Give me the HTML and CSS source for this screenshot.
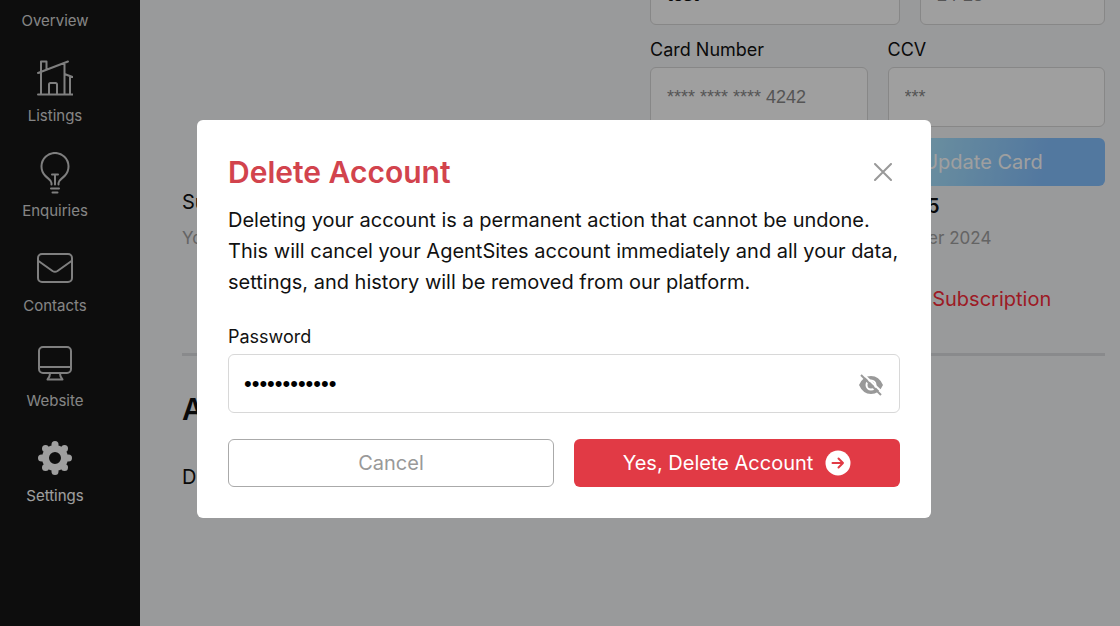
FILE: index.html
```html
<!DOCTYPE html>
<html lang="en">
<head>
  <meta charset="UTF-8">
  <meta name="viewport" content="width=device-width, initial-scale=1.0">
  <title>Settings - AgentSites</title>
  <link rel="stylesheet" href="styles.css">
</head>
<body>

  <div class="app">
    <nav class="sidebar">
      <a href="#" class="nav-item">
        <svg class="nav-icon" viewBox="0 0 36 36"><path d="M2 34h32M6 34V14h24v20"/></svg>
        <span>Overview</span>
      </a>
      <a href="#" class="nav-item">
        <svg class="nav-icon" viewBox="0 0 36 36"><path d="M1 34.500H35.500M4 34.500V12M1 13L31 1.500M4 11V1.500H9.500V9M27.500 3V34.500M27.500 14L35.500 17M33 16.500V34.500M12 34.500V24.500Q12 23 13.500 23H18.500Q20 23 20 24.500V34.500"/></svg>
        <span>Listings</span>
      </a>
      <a href="#" class="nav-item">
        <svg class="nav-icon nav-icon-tall" viewBox="0 0 36 42"><path d="M14.500 32.500V31C14.500 28 11 27 8 23.500A13.500 13.500 0 1 1 28 23.500C25 27 21.500 28 21.500 31V32.500M18 32.500V22.500M15 22.500H21M14 36.500H22M15.500 40.500H20.500"/></svg>
        <span>Enquiries</span>
      </a>
      <a href="#" class="nav-item">
        <svg class="nav-icon" viewBox="0 0 36 36"><rect x="1" y="4" width="34" height="28" rx="4"/><path d="M1.500 11L15.500 21Q18 22.500 20.500 21L34.500 11"/></svg>
        <span>Contacts</span>
      </a>
      <a href="#" class="nav-item">
        <svg class="nav-icon" viewBox="0 0 36 36"><rect x="2" y="2" width="32" height="26" rx="4"/><path d="M2 22H34M13 28.500Q13 32 10.500 34.500H25.500Q23 32 23 28.500"/></svg>
        <span>Website</span>
      </a>
      <a href="#" class="nav-item active">
        <svg class="nav-icon" viewBox="0 0 36 36">
          <g class="gear">
            <circle class="ring" cx="18" cy="18" r="9.500"/>
            <circle cx="18" cy="4.500" r="3.500"/>
            <circle cx="27.500" cy="8.500" r="3.500"/>
            <circle cx="31.500" cy="18" r="3.500"/>
            <circle cx="27.500" cy="27.500" r="3.500"/>
            <circle cx="18" cy="31.500" r="3.500"/>
            <circle cx="8.500" cy="27.500" r="3.500"/>
            <circle cx="4.500" cy="18" r="3.500"/>
            <circle cx="8.500" cy="8.500" r="3.500"/>
          </g>
        </svg>
        <span>Settings</span>
      </a>
    </nav>

    <main class="content">
      <form class="payment">
        <div class="field-row name-row">
          <input type="text" class="field name" value="test" aria-label="Name on card">
          <input type="text" class="field" placeholder="24-28" aria-label="Expiry">
        </div>
        <div class="field-row">
          <div class="field-group">
            <label for="card">Card Number</label>
            <input type="text" class="field" id="card" placeholder="**** **** **** 4242">
          </div>
          <div class="field-group">
            <label for="ccv">CCV</label>
            <input type="text" class="field" id="ccv" placeholder="***">
          </div>
        </div>
        <button type="button" class="btn btn-update">Update Card</button>
      </form>

      <section class="subscription">
        <div class="summary">
          <p class="plan">Su</p>
          <p class="note">Your</p>
        </div>
        <div class="billing">
          <p class="price">$149.95</p>
          <p class="note">December 2024</p>
          <a href="#" class="cancel-link">Cancel Subscription</a>
        </div>
      </section>

      <section class="account">
        <h2>Account</h2>
        <p>Delete</p>
      </section>
    </main>
  </div>

  <div class="overlay">
    <div class="modal" role="dialog" aria-modal="true" aria-labelledby="modal-title">
      <div class="modal-header">
        <h1 id="modal-title">Delete Account</h1>
        <button type="button" class="icon-btn close" aria-label="Close">
          <svg width="18" height="18" viewBox="0 0 18 18"><path d="M1 1L17 17M17 1L1 17"/></svg>
        </button>
      </div>
      <p class="modal-text">Deleting your account is a permanent action that cannot be undone. This will cancel your AgentSites account immediately and all your data, settings, and history will be removed from our platform.</p>

      <label for="password">Password</label>
      <div class="password-box">
        <input type="password" id="password" value="secret123456">
        <button type="button" class="icon-btn" aria-label="Show password">
          <svg width="26" height="24" viewBox="0 -2 26 24">
            <path class="eye" fill-rule="evenodd" d="M1 11Q5 2 13 2T25 11Q21 20 13 20T1 11ZM13 5.500A5.500 5.500 0 1 0 13 16.500A5.500 5.500 0 1 0 13 5.500Z"/>
            <circle class="eye" cx="13" cy="11" r="3.500"/>
            <path class="slash-gap" d="M5 0L26 20"/>
            <path class="slash" d="M3 1L23 21"/>
          </svg>
        </button>
      </div>

      <div class="modal-actions">
        <button type="button" class="btn btn-cancel">Cancel</button>
        <button type="button" class="btn btn-delete">
          Yes, Delete Account
          <svg width="26" height="26" viewBox="0 0 26 26"><circle cx="13" cy="13" r="12.500"/><path d="M7.500 13H18M13.500 8.500L18 13L13.500 17.500"/></svg>
        </button>
      </div>
    </div>
  </div>

</body>
</html>
```
FILE: styles.css
```css
* {
  box-sizing: border-box;
}
body {
  margin: 0;
  height: 100vh;
  overflow: hidden;
  font-family: Inter, "Liberation Sans", sans-serif;
  font-size: 20px;
  color: #111;
  background-color: #f6f7f9;
}
h1, h2, p {
  margin: 0;
}
button {
  font-family: inherit;
}
input {
  font-family: "Liberation Sans", Arial, sans-serif;
}
label {
  display: block;
  font-size: 18px;
  line-height: 20px;
  margin-bottom: 7px;
}
.app {
  display: flex;
  height: 100vh;
  overflow: hidden;
}

/* sidebar */
.sidebar {
  display: flex;
  flex-direction: column;
  align-items: center;
  gap: 29px;
  flex: 0 0 140px;
  padding-right: 30px;
  background-color: #161616;
  /* scrolled under the top edge */
  margin-top: -35px;
}
.nav-item {
  display: flex;
  flex-direction: column;
  align-items: center;
  gap: 10px;
  color: #d6d6d6;
  font-size: 15px;
  line-height: 20px;
  text-decoration: none;
}
.nav-icon {
  width: 36px;
  height: 36px;
  fill: none;
  stroke: #cccccc;
  stroke-width: 2;
  stroke-linecap: round;
  stroke-linejoin: round;
}
.nav-icon-tall {
  height: 42px;
  margin: -3px 0;
}
.nav-item.active {
  color: #fff;
}
.gear circle {
  fill: #fff;
  stroke: none;
}
.gear .ring {
  fill: none;
  stroke: #fff;
  stroke-width: 7;
}

/* page */
.content {
  flex: 1;
  padding: 0 15px 0 42px;
  margin-top: -35px;
}
.payment {
  width: 455px;
  margin-left: auto;
}
.field-row {
  display: grid;
  grid-template-columns: 1fr 1fr;
  gap: 20px;
}
.name-row {
  grid-template-columns: 250px 1fr;
  margin-bottom: 15px;
}
.field {
  width: 100%;
  height: 60px;
  padding: 0 16px;
  font-size: 18px;
  color: #111;
  background-color: #fff;
  border: 1px solid #d8d8d8;
  border-radius: 6px;
}
.field.name {
  font-weight: bold;
}
.field::placeholder {
  color: #888;
}
.btn {
  height: 48px;
  font-size: 20px;
  border: none;
  border-radius: 6px;
  cursor: pointer;
}
.btn-update {
  display: block;
  width: 244px;
  margin: 11px 0 0 auto;
  color: #fff;
  background: linear-gradient(100deg, #bff8ff, #84c0ff 75%);
}
.subscription {
  display: flex;
  justify-content: space-between;
  padding: 2px 0 37px;
  border-bottom: 3px solid #dcdde0;
}
.note {
  font-size: 17px;
  line-height: 28px;
  color: #a0a0a0;
}
.plan {
  line-height: 28px;
  margin-bottom: 8px;
}
.billing {
  width: 244px;
}
.price {
  font-weight: 600;
  line-height: 36px;
}
.cancel-link {
  display: block;
  margin-top: 30px;
  line-height: 34px;
  color: #fb2c3a;
  text-decoration: none;
}
.account h2 {
  margin: 33px 0 36px;
  font-size: 30px;
  font-weight: 600;
  line-height: 40px;
}

/* delete account modal */
.overlay {
  position: fixed;
  inset: 0;
  display: flex;
  align-items: center;
  justify-content: center;
  padding: 12px 0 0 8px;
  background-color: rgba(0, 0, 0, 0.376);
}
.modal {
  width: 734px;
  padding: 32px 31px 31px;
  background-color: #fff;
  border-radius: 6px;
}
.modal-header {
  display: flex;
  align-items: center;
  justify-content: space-between;
  padding-right: 8px;
}
.modal-header h1 {
  font-size: 30px;
  font-weight: 600;
  line-height: 40px;
  color: #d2434d;
}
.icon-btn {
  display: flex;
  padding: 0;
  background: none;
  border: none;
  cursor: pointer;
}
.close svg {
  stroke: #999;
  stroke-width: 2;
  stroke-linecap: round;
}
.modal-text {
  margin: 13px 0 29px;
  line-height: 31px;
}
.password-box {
  display: flex;
  align-items: center;
  height: 59px;
  padding: 0 15px;
  border: 1px solid #d8d8d8;
  border-radius: 6px;
}
.password-box input {
  flex: 1;
  padding: 0;
  font-size: 22px;
  border: none;
  outline: none;
}
.eye {
  fill: #999;
}
.slash-gap {
  stroke: #fff;
  stroke-width: 2;
}
.slash {
  stroke: #999;
  stroke-width: 2;
}
.modal-actions {
  display: grid;
  grid-template-columns: 1fr 1fr;
  gap: 20px;
  margin-top: 26px;
}
.btn-cancel {
  color: #999;
  background-color: #fff;
  border: 1px solid #aaa;
}
.btn-delete {
  display: flex;
  align-items: center;
  justify-content: center;
  gap: 12px;
  color: #fff;
  background-color: #e13a45;
}
.btn-delete circle {
  fill: #fff;
}
.btn-delete path {
  fill: none;
  stroke: #e13a45;
  stroke-width: 2;
  stroke-linecap: round;
  stroke-linejoin: round;
}
```
